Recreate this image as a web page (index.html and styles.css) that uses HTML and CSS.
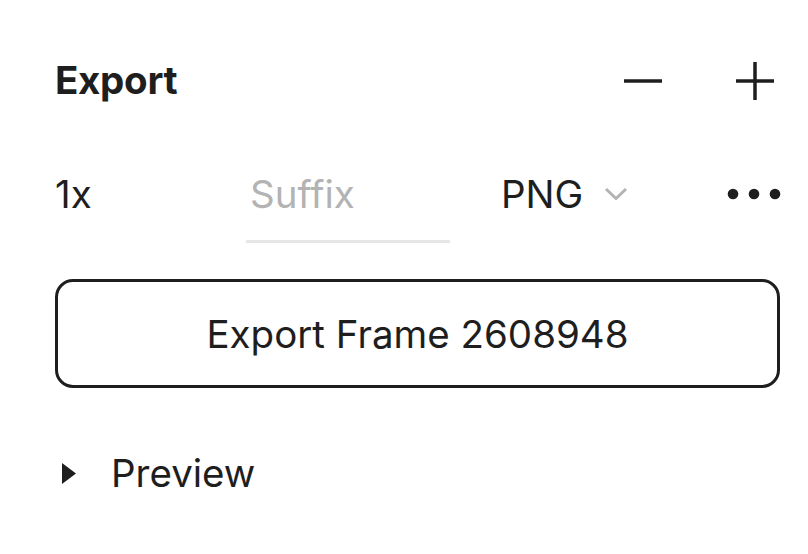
FILE: index.html
```html
<!DOCTYPE html>
<html>
<head>
<meta charset="utf-8">
<link rel="stylesheet" href="styles.css">
</head>
<body>
<div class="panel">
  <div class="header">
    <div class="title">Export</div>
    <div class="actions">
      <span class="icon-btn">
        <svg width="40" height="40" viewBox="0 0 40 40"><line x1="1" y1="20" x2="39" y2="20" stroke="#1e1e1e" stroke-width="3.5"/></svg>
      </span>
      <span class="icon-btn">
        <svg width="40" height="40" viewBox="0 0 40 40"><line x1="1" y1="20" x2="39" y2="20" stroke="#1e1e1e" stroke-width="3.5"/><line x1="20" y1="1" x2="20" y2="39" stroke="#1e1e1e" stroke-width="3.5"/></svg>
      </span>
    </div>
  </div>
  <div class="settings">
    <div class="scale">1x</div>
    <div class="suffix-cell">
      <div class="suffix">Suffix</div>
    </div>
    <div class="format">
      <span>PNG</span>
      <svg class="chev" width="24" height="14" viewBox="0 0 24 14"><polyline points="2,2 12,11.5 22,2" fill="none" stroke="#b3b3b3" stroke-width="3"/></svg>
    </div>
    <div class="more">
      <svg width="54" height="12" viewBox="0 0 54 12"><circle cx="6" cy="6" r="5.3" fill="#1e1e1e"/><circle cx="27" cy="6" r="5.3" fill="#1e1e1e"/><circle cx="48" cy="6" r="5.3" fill="#1e1e1e"/></svg>
    </div>
  </div>
  <div class="export-btn">Export Frame 2608948</div>
  <div class="preview">
    <svg class="tri" width="14" height="21" viewBox="0 0 14 21"><polygon points="0,0 14,10.5 0,21" fill="#1e1e1e"/></svg>
    <span>Preview</span>
  </div>
</div>
</body>
</html>
```

FILE: styles.css
```css
html, body {
  margin: 0;
  padding: 0;
  background: #ffffff;
}
body {
  font-family: Inter, "Noto Sans", sans-serif;
  font-size: 38.5px;
  color: #1e1e1e;
}
.panel {
  width: 725px;
  padding: 25px 0 0 55px;
}
.header {
  height: 112px;
  display: flex;
  align-items: center;
  justify-content: space-between;
}
.title {
  font-weight: 700;
  line-height: 56px;
  margin-top: -2px;
  letter-spacing: -0.3px;
}
.actions {
  display: flex;
  align-items: center;
  gap: 72px;
  margin-right: 5px;
}
.icon-btn {
  display: flex;
  width: 40px;
  height: 40px;
}
.settings {
  display: flex;
  align-items: flex-start;
  padding-top: 29px;
}
.scale {
  width: 169px;
  line-height: 56px;
}
.suffix-cell {
  width: 248px;
  padding-left: 22px;
  box-sizing: border-box;
}
.suffix {
  width: 204px;
  line-height: 56px;
  padding-left: 4px;
  padding-bottom: 18px;
  border-bottom: 3px solid #e6e6e6;
  color: #b3b3b3;
  box-sizing: border-box;
}
.format {
  margin-left: 29px;
  display: flex;
  align-items: center;
  line-height: 56px;
  height: 56px;
}
.chev {
  margin-left: 21px;
  margin-top: 0;
}
.more {
  margin-left: auto;
  height: 56px;
  display: flex;
  align-items: center;
  margin-right: -1px;
}
.export-btn {
  margin-top: 36px;
  height: 109px;
  box-sizing: border-box;
  border: 3px solid #1e1e1e;
  border-radius: 18px;
  display: flex;
  align-items: center;
  justify-content: center;
  line-height: 56px;
}
.preview {
  margin-top: 57px;
  display: flex;
  align-items: center;
  height: 56px;
  line-height: 56px;
}
.tri {
  margin-left: 7px;
  margin-right: 35px;
}
```
